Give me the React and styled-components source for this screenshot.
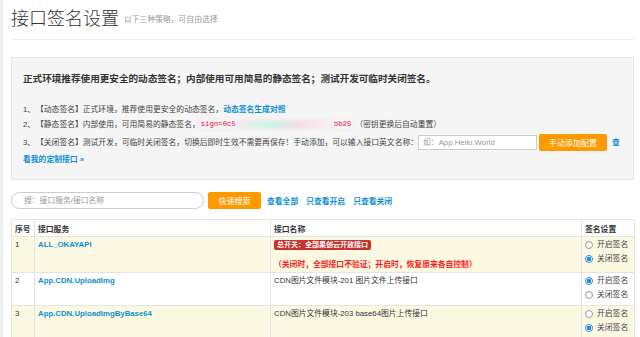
import React from 'react';
import styled, { createGlobalStyle } from 'styled-components';

const GlobalStyle = createGlobalStyle`
  html, body {
    margin: 0;
    padding: 0;
    background: #fff;
  }
  body {
    font-family: "Liberation Sans", "Noto Sans CJK SC", sans-serif;
    color: #333;
  }
`;

const Page = styled.div`
  width: 640px;
  height: 337px;
  overflow: hidden;
  box-sizing: border-box;
  border-left: 3px solid #eeeeee;
  padding: 0 6px 0 8px;
`;

const Header = styled.div`
  display: flex;
  align-items: center;
  padding-top: 5px;
  height: 23px;
`;

const Title = styled.h1`
  margin: 0;
  font-size: 18px;
  font-weight: 300;
  color: #333;
`;

const Subtitle = styled.small`
  margin-left: 5px;
  margin-top: 3px;
  font-size: 7.8px;
  color: #999;
`;

const Rule = styled.hr`
  margin: 11px 0 0;
  border: 0;
  border-top: 1px solid #eee;
`;

const Well = styled.div`
  margin-top: 17px;
  background: #f5f5f5;
  border: 1px solid #e6e6e6;
  padding: 14px 10px 11px 11px;
`;

const WellTitle = styled.div`
  font-size: 9.6px;
  line-height: 14px;
  font-weight: bold;
  color: #333;
`;

const List = styled.ol`
  list-style: none;
  margin: 16px 0 0;
  padding: 0;
  font-size: 7.8px;
  color: #444;
`;

const Item = styled.li`
  line-height: ${(p) => p.$lh || 15}px;
  margin-bottom: ${(p) => p.$mb || 0}px;
`;

const Num = styled.span`
  display: inline-block;
  width: 13px;
`;

const Link = styled.a`
  color: #0e90d2;
  text-decoration: none;
  font-weight: ${(p) => (p.$bold ? 'bold' : 'normal')};
  margin-left: ${(p) => p.$ml || 0}px;
  cursor: pointer;
`;

const Code = styled.code`
  display: inline-block;
  font-family: "Liberation Mono", "DejaVu Sans Mono", monospace;
  font-size: 7.3px;
  line-height: 11px;
  color: #dd1144;
  background: #f9f2f4;
  border: 1px solid #f0f0f0;
  padding: 0 3px;
  margin-left: -3px;
  vertical-align: middle;
`;

const Blurred = styled.span`
  display: inline-block;
  width: 98px;
  height: 9px;
  vertical-align: middle;
  background: linear-gradient(90deg, #f7e9ee 0%, #d9f2ea 22%, #d3f1e9 40%, #f5dde7 62%, #f8e6ed 80%, #f9f0f3 100%);
  filter: blur(1px);
`;

const TextInput = styled.input`
  box-sizing: border-box;
  width: 119px;
  height: 15px;
  border: 1px solid #ccc;
  background: #fff;
  font-size: 7.8px;
  padding: 0 4px;
  vertical-align: middle;
  font-family: inherit;
  outline: none;
  &::placeholder {
    color: #999;
  }
`;

const OrangeButton = styled.button`
  box-sizing: border-box;
  height: 17px;
  width: ${(p) => p.$w}px;
  margin-left: ${(p) => p.$ml || 0}px;
  border: 0;
  border-radius: 2px;
  background: #ff9900;
  color: #fff;
  font-size: 8px;
  font-family: inherit;
  padding: 0;
  vertical-align: middle;
  cursor: pointer;
`;

const SearchRow = styled.div`
  display: flex;
  align-items: center;
  margin-top: 12px;
  height: 17px;
`;

const SearchInput = styled.input`
  box-sizing: border-box;
  width: 193px;
  height: 17px;
  border: 1px solid #ccc;
  border-radius: 9px;
  padding: 0 12px;
  font-size: 7.8px;
  font-family: inherit;
  outline: none;
  &::placeholder {
    color: #999;
  }
`;

const FilterLinks = styled.div`
  display: flex;
  gap: 8px;
  margin-left: 6px;
  font-size: 7.8px;
`;

const Table = styled.table`
  margin-top: 10px;
  width: 624px;
  border-collapse: collapse;
  table-layout: fixed;
  font-size: 7.8px;
  color: #333;
`;

const Th = styled.th`
  box-sizing: border-box;
  text-align: left;
  font-weight: bold;
  height: 17px;
  padding: 0 3px;
  border: 1px solid #e4e4e4;
  background: #fff;
  width: ${(p) => (p.$w ? `${p.$w}px` : 'auto')};
`;

const Tr = styled.tr`
  height: ${(p) => p.$h}px;
  background: ${(p) => (p.$warn ? '#fcf9e3' : '#fff')};
`;

const Td = styled.td`
  vertical-align: top;
  padding: 1px 3px 0;
  line-height: 14px;
  border: 1px solid #e4e4e4;
`;

const Badge = styled.span`
  display: inline-block;
  background: #c9302c;
  color: #fff;
  font-size: 7px;
  font-weight: bold;
  line-height: 10px;
  padding: 0 3px;
  border-radius: 2px;
`;

const Warning = styled.div`
  margin-top: 6px;
  color: #ff1a1a;
  font-weight: bold;
`;

const RadioLabel = styled.label`
  display: flex;
  align-items: center;
  gap: 4px;
  height: 14px;
  color: #444;
  white-space: nowrap;
`;

const RadioDot = styled.span`
  box-sizing: border-box;
  flex: none;
  width: 8px;
  height: 8px;
  border-radius: 50%;
  border: 1px solid ${(p) => (p.$on ? '#1e88e5' : '#999')};
  background: ${(p) => (p.$on ? 'radial-gradient(circle, #1e88e5 0 2px, #fff 2.4px)' : '#fff')};
`;

const Radios = ({ on }) => (
  <>
    <RadioLabel>
      <RadioDot $on={on} />
      开启签名
    </RadioLabel>
    <RadioLabel>
      <RadioDot $on={!on} />
      关闭签名
    </RadioLabel>
  </>
);

const rows = [
  { id: 2, service: 'App.CDN.UploadImg', name: 'CDN图片文件模块-201 图片文件上传接口', on: true },
  { id: 3, service: 'App.CDN.UploadImgByBase64', name: 'CDN图片文件模块-203 base64图片上传接口', on: false },
];

const App = () => {
  return (
    <Page>
      <GlobalStyle />
      <Header>
        <Title>接口签名设置</Title>
        <Subtitle>以下三种策略，可自由选择</Subtitle>
      </Header>
      <Rule />

      <Well>
        <WellTitle>正式环境推荐使用更安全的动态签名；内部使用可用简易的静态签名；测试开发可临时关闭签名。</WellTitle>
        <List>
          <Item>
            <Num>1、</Num>【动态签名】正式环境，推荐使用更安全的动态签名，
            <Link $bold>动态签名生成对照</Link>
          </Item>
          <Item $mb={2}>
            <Num>2、</Num>【静态签名】内部使用，可用简易的静态签名，
            <Code>
              sign=0c5
              <Blurred />
              bb25
            </Code>
            （密钥更换后自动重置）
          </Item>
          <Item $lh={17}>
            <Num>3、</Num>【关闭签名】测试开发，可临时关闭签名，切换后即时生效不需要再保存！手动添加，可以输入接口英文名称：
            <TextInput placeholder="如：App.Hello.World" />
            <OrangeButton $w={68} $ml={2}>手动添加配置</OrangeButton>
            <Link $bold $ml={5}>查看我的定制接口 »</Link>
          </Item>
        </List>
      </Well>

      <SearchRow>
        <SearchInput placeholder="搜：接口服务/接口名称" />
        <OrangeButton $w={53} $ml={4}>快速搜索</OrangeButton>
        <FilterLinks>
          <Link $bold>查看全部</Link>
          <Link $bold>只查看开启</Link>
          <Link $bold>只查看关闭</Link>
        </FilterLinks>
      </SearchRow>

      <Table>
        <thead>
          <tr>
            <Th $w={23}>序号</Th>
            <Th $w={236}>接口服务</Th>
            <Th $w={311}>接口名称</Th>
            <Th>签名设置</Th>
          </tr>
        </thead>
        <tbody>
          <Tr $h={36} $warn>
            <Td>1</Td>
            <Td>
              <Link $bold>ALL_OKAYAPI</Link>
            </Td>
            <Td>
              <Badge>总开关：全部果创云开放接口</Badge>
              <Warning>（关闭时，全部接口不验证；开启时，恢复原来各自控制）</Warning>
            </Td>
            <Td>
              <Radios on={false} />
            </Td>
          </Tr>
          {rows.map((r) => (
            <Tr key={r.id} $h={33} $warn={r.id % 2 === 1}>
              <Td>{r.id}</Td>
              <Td>
                <Link $bold>{r.service}</Link>
              </Td>
              <Td>{r.name}</Td>
              <Td>
                <Radios on={r.on} />
              </Td>
            </Tr>
          ))}
        </tbody>
      </Table>
    </Page>
  );
};

export default App;
